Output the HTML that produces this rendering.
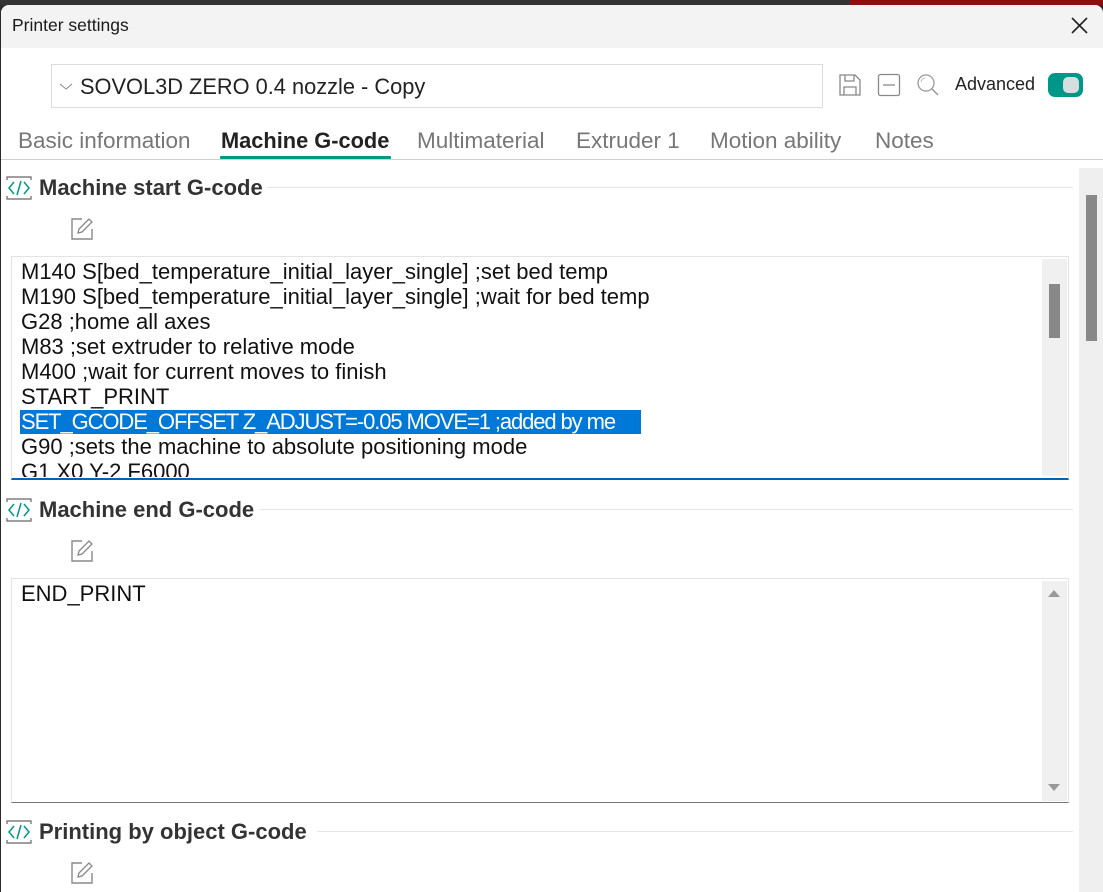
<!DOCTYPE html>
<html><head><meta charset="utf-8"><style>
*{margin:0;padding:0;box-sizing:border-box}
body{width:1103px;height:892px;overflow:hidden;background:#2b2b2b;font-family:"Liberation Sans",sans-serif;position:relative}
.dlg{position:absolute;left:1px;top:5px;width:1102px;height:887px;background:#fff;border-radius:8px 8px 0 0;overflow:hidden}
.title{position:absolute;left:0;top:0;width:100%;height:43px;background:#f3f3f3}
.title span{position:absolute;left:11px;top:10px;font-size:17.5px;color:#1a1a1a}
.abs{position:absolute}
.combo{left:50px;top:59px;width:772px;height:44px;border:1px solid #dcdcdc}
.combo span{position:absolute;left:28px;top:9px;font-size:21.8px;color:#222}
.tab{position:absolute;top:123px;font-size:22.5px;color:#777}
.sech{position:absolute;font-size:22px;font-weight:bold;color:#333}
.hl{position:absolute;height:1px;background:#e6e6e6}
.ta{position:absolute;left:10px;width:1058px;border:1px solid #e3e3e3;background:#fff}
.ta .l{position:absolute;left:9px;font-size:22px;color:#111;white-space:pre;line-height:25px}
</style></head><body>
<div class="abs" style="left:0;top:0;width:1103px;height:5px;background:#333"></div>
<div class="abs" style="left:850px;top:0;width:253px;height:5px;background:#8a0f0f"></div>
<div class="dlg">
<div class="title"><span>Printer settings</span>
<svg class="abs" style="left:1070px;top:12px" width="17" height="17"><path d="M1 1L16 16M16 1L1 16" stroke="#222" stroke-width="1.6"/></svg></div>
<div class="abs combo"><svg class="abs" style="left:7px;top:18px" width="14" height="8"><path d="M1 1L7 6L13 1" stroke="#888" fill="none"/></svg><span>SOVOL3D ZERO 0.4 nozzle - Copy</span></div>
<svg class="abs" style="left:837px;top:68px" width="24" height="24"><path d="M2 2H17L22 7V22H2Z M7 2V8H16V2 M6 22V14H18V22" stroke="#888" stroke-width="1.3" fill="none"/></svg>
<svg class="abs" style="left:876px;top:68px" width="24" height="24"><rect x="1.5" y="1.5" width="21" height="21" rx="2" stroke="#888" stroke-width="1.3" fill="none"/><path d="M6 12H18" stroke="#888" stroke-width="1.3"/></svg>
<svg class="abs" style="left:915px;top:68px" width="24" height="24"><circle cx="10" cy="10" r="8" stroke="#999" stroke-width="1.3" fill="none"/><path d="M16 16L22 22" stroke="#999" stroke-width="1.5"/><path d="M5 9A5 5 0 0 1 9 5" stroke="#bbb" fill="none"/></svg>
<div class="abs" style="left:954px;top:69px;font-size:18px;color:#222">Advanced</div>
<div class="abs" style="left:1047px;top:68px;width:35px;height:24px;border-radius:7px;background:#009688"><div class="abs" style="left:15px;top:4px;width:16px;height:16px;border-radius:5px;background:#d6dfe0"></div></div>
<div class="tab" style="left:17px">Basic information</div>
<div class="tab" style="left:220px;color:#222;font-weight:bold;font-size:21.8px">Machine G-code</div>
<div class="abs" style="left:219px;top:151px;width:171px;height:3px;background:#009688;border-radius:1px"></div>
<div class="tab" style="left:416px">Multimaterial</div>
<div class="tab" style="left:575px">Extruder 1</div>
<div class="tab" style="left:709px">Motion ability</div>
<div class="tab" style="left:874px">Notes</div>
<div class="hl" style="left:0;top:154px;width:1102px;background:#d0d0d0"></div>
<div class="abs" style="left:1078px;top:163px;width:24px;height:724px;background:#efefef"></div>
<div class="abs" style="left:1085px;top:190px;width:11px;height:146px;background:#888"></div>

<!-- section 1 -->
<svg class="abs" style="left:5px;top:170px" width="26" height="26"><path d="M1 5V2H25V5M1 21V24H25V21" stroke="#666" stroke-width="1.2" fill="none"/><path d="M8 7L3 13L8 19M18 7L23 13L18 19M15 6L11 20" stroke="#009688" stroke-width="1.5" fill="none"/></svg>
<div class="sech" style="left:38px;top:170px">Machine start G-code</div>
<div class="hl" style="left:266px;top:182px;width:806px"></div>
<svg class="abs" style="left:69px;top:212px" width="24" height="24"><path d="M12 2H2V22H22V12" stroke="#888" stroke-width="1.4" fill="none"/><path d="M8 16L9 12L19 2L22 5L12 15Z" stroke="#888" stroke-width="1.3" fill="none"/></svg>
<div class="ta" style="top:251px;height:224px;border-bottom:2px solid #0063b1">
<div class="abs" style="left:1030px;top:2px;width:25px;height:217px;background:#f0f0f0"></div>
<div class="abs" style="left:1037px;top:27px;width:11px;height:54px;background:#888"></div>
<div class="abs" style="left:8px;top:153px;width:621px;height:24px;background:#0078d7"></div>
<div class="l" style="top:2px">M140 S[bed_temperature_initial_layer_single] ;set bed temp</div>
<div class="l" style="top:27px">M190 S[bed_temperature_initial_layer_single] ;wait for bed temp</div>
<div class="l" style="top:52px">G28 ;home all axes</div>
<div class="l" style="top:77px">M83 ;set extruder to relative mode</div>
<div class="l" style="top:102px">M400 ;wait for current moves to finish</div>
<div class="l" style="top:127px">START_PRINT</div>
<div class="l" style="top:152px;color:#fff;letter-spacing:-1.1px">SET_GCODE_OFFSET Z_ADJUST=-0.05 MOVE=1 ;added by me</div>
<div class="l" style="top:177px">G90 ;sets the machine to absolute positioning mode</div>
<div class="l" style="top:202px;height:18px;overflow:hidden">G1 X0 Y-2 F6000</div>
</div>

<!-- section 2 -->
<svg class="abs" style="left:5px;top:492px" width="26" height="26"><path d="M1 5V2H25V5M1 21V24H25V21" stroke="#666" stroke-width="1.2" fill="none"/><path d="M8 7L3 13L8 19M18 7L23 13L18 19M15 6L11 20" stroke="#009688" stroke-width="1.5" fill="none"/></svg>
<div class="sech" style="left:38px;top:492px">Machine end G-code</div>
<div class="hl" style="left:258px;top:504px;width:814px"></div>
<svg class="abs" style="left:69px;top:534px" width="24" height="24"><path d="M12 2H2V22H22V12" stroke="#888" stroke-width="1.4" fill="none"/><path d="M8 16L9 12L19 2L22 5L12 15Z" stroke="#888" stroke-width="1.3" fill="none"/></svg>
<div class="ta" style="top:573px;height:225px;border-bottom:1px solid #777">
<div class="abs" style="left:1030px;top:2px;width:25px;height:220px;background:#f0f0f0"></div>
<svg class="abs" style="left:1036px;top:10px" width="12" height="8"><path d="M0 8L6 1L12 8Z" fill="#999"/></svg>
<svg class="abs" style="left:1036px;top:205px" width="12" height="8"><path d="M0 0L6 7L12 0Z" fill="#999"/></svg>
<div class="l" style="top:2px">END_PRINT</div>
</div>

<!-- section 3 -->
<svg class="abs" style="left:5px;top:814px" width="26" height="26"><path d="M1 5V2H25V5M1 21V24H25V21" stroke="#666" stroke-width="1.2" fill="none"/><path d="M8 7L3 13L8 19M18 7L23 13L18 19M15 6L11 20" stroke="#009688" stroke-width="1.5" fill="none"/></svg>
<div class="sech" style="left:38px;top:814px">Printing by object G-code</div>
<div class="hl" style="left:316px;top:826px;width:756px"></div>
<svg class="abs" style="left:69px;top:856px" width="24" height="24"><path d="M12 2H2V22H22V12" stroke="#888" stroke-width="1.4" fill="none"/><path d="M8 16L9 12L19 2L22 5L12 15Z" stroke="#888" stroke-width="1.3" fill="none"/></svg>
</div>
</body></html>
